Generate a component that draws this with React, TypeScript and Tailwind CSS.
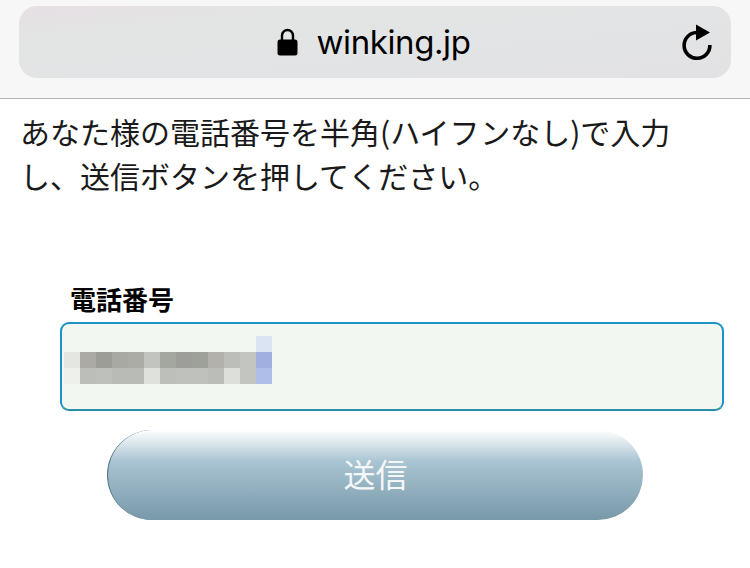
const ROWS = [
  ['', '', '', '', '', '', '', '', '', '', '', '', '#dbe4f3'],
  ['#e4e6e2', '#abaaa5', '#9d9d98', '#a9a9a4', '#acaca7', '#c2c5bf', '#a4a6a0', '#9d9d9a', '#9ea09a', '#b2b1ac', '#bcbfb9', '#c3c5c0', '#a0aee0'],
  ['#edf0eb', '#bcbfb9', '#bec1bb', '#b9bcb6', '#b9bcb6', '#dfe2dc', '#bdc0ba', '#bfc2bc', '#bfc2bc', '#bbbeb8', '#dde0da', '#c3c5c0', '#aebee9'],
];

function LockIcon() {
  return (
    <svg width="21" height="28" viewBox="0 0 21 28" className="block">
      <path d="M5 13V7.5a5.5 5.5 0 0 1 11 0V13" fill="none" stroke="#000" strokeWidth="2.4" />
      <rect x="0.5" y="11.5" width="20" height="16" rx="2.5" fill="#000" />
    </svg>
  );
}

function ReloadIcon() {
  return (
    <svg width="32" height="38" viewBox="0 0 32 38" className="block">
      <path d="M15.5 9.5A12.9 12.9 0 1 0 28.9 22" fill="none" stroke="#000" strokeWidth="3.6" />
      <path d="M15 1.5 L29 9.5 L15 17.5 Z" fill="#000" />
    </svg>
  );
}

export default function App() {
  return (
    <div className="w-[750px] h-[568px] overflow-hidden bg-white text-black font-['Noto_Sans_CJK_JP','Noto_Sans',sans-serif]">
      {/* browser bar */}
      <div className="h-[99px] px-[19px] pt-[6px] bg-[#f7f7f7] border-b border-[#b4b4b4]">
        <div className="h-[72px] rounded-[18px] grid grid-cols-[1fr_auto_1fr] items-center bg-linear-to-br from-[#e6dfe3] via-[#e3e5e5] via-25% to-[#e2e2e4]">
          <div />
          <div className="flex items-center gap-[18px] pr-[2px]">
            <LockIcon />
            <span className="font-['Inter',sans-serif] text-[33px] leading-[44px] tracking-[-0.4px]">winking.jp</span>
          </div>
          <div className="flex justify-end pr-[18px]">
            <ReloadIcon />
          </div>
        </div>
      </div>

      {/* message */}
      <p className="pl-[20px] pt-[10px] w-[680px] text-[30px] leading-[44px] text-[#1a1a1a]">
        あなた様の電話番号を半角(ハイフンなし)で入力し、送信ボタンを押してください。
      </p>

      {/* form */}
      <div className="pl-[60px] pr-[26px] pt-[84px]">
        <label className="block pl-[10px] text-[26px] leading-[36px] font-bold">電話番号</label>
        <div className="mt-[5px] h-[89px] rounded-[9px] border-2 border-[#1c93c4] border-b-[#2a8fa5] bg-[#f3f7f1] pl-[2px] pt-[12px]">
          <div className="grid grid-cols-[repeat(13,16px)] auto-rows-[16px]">
            {ROWS.flat().map((c, i) => (
              <div key={i} style={c ? { backgroundColor: c } : undefined} />
            ))}
          </div>
        </div>
        <div className="mt-[19px] pl-[47px] pr-[81px]">
          <button className="w-full h-[90px] pb-[4px] rounded-full text-[32px] leading-[86px] text-[#f4f7f8] border-l border-[#4f7586] bg-linear-to-b from-[#ffffff] via-[#a9c4d2] via-35% to-[#7899a8]">
            送信
          </button>
        </div>
      </div>
    </div>
  );
}
